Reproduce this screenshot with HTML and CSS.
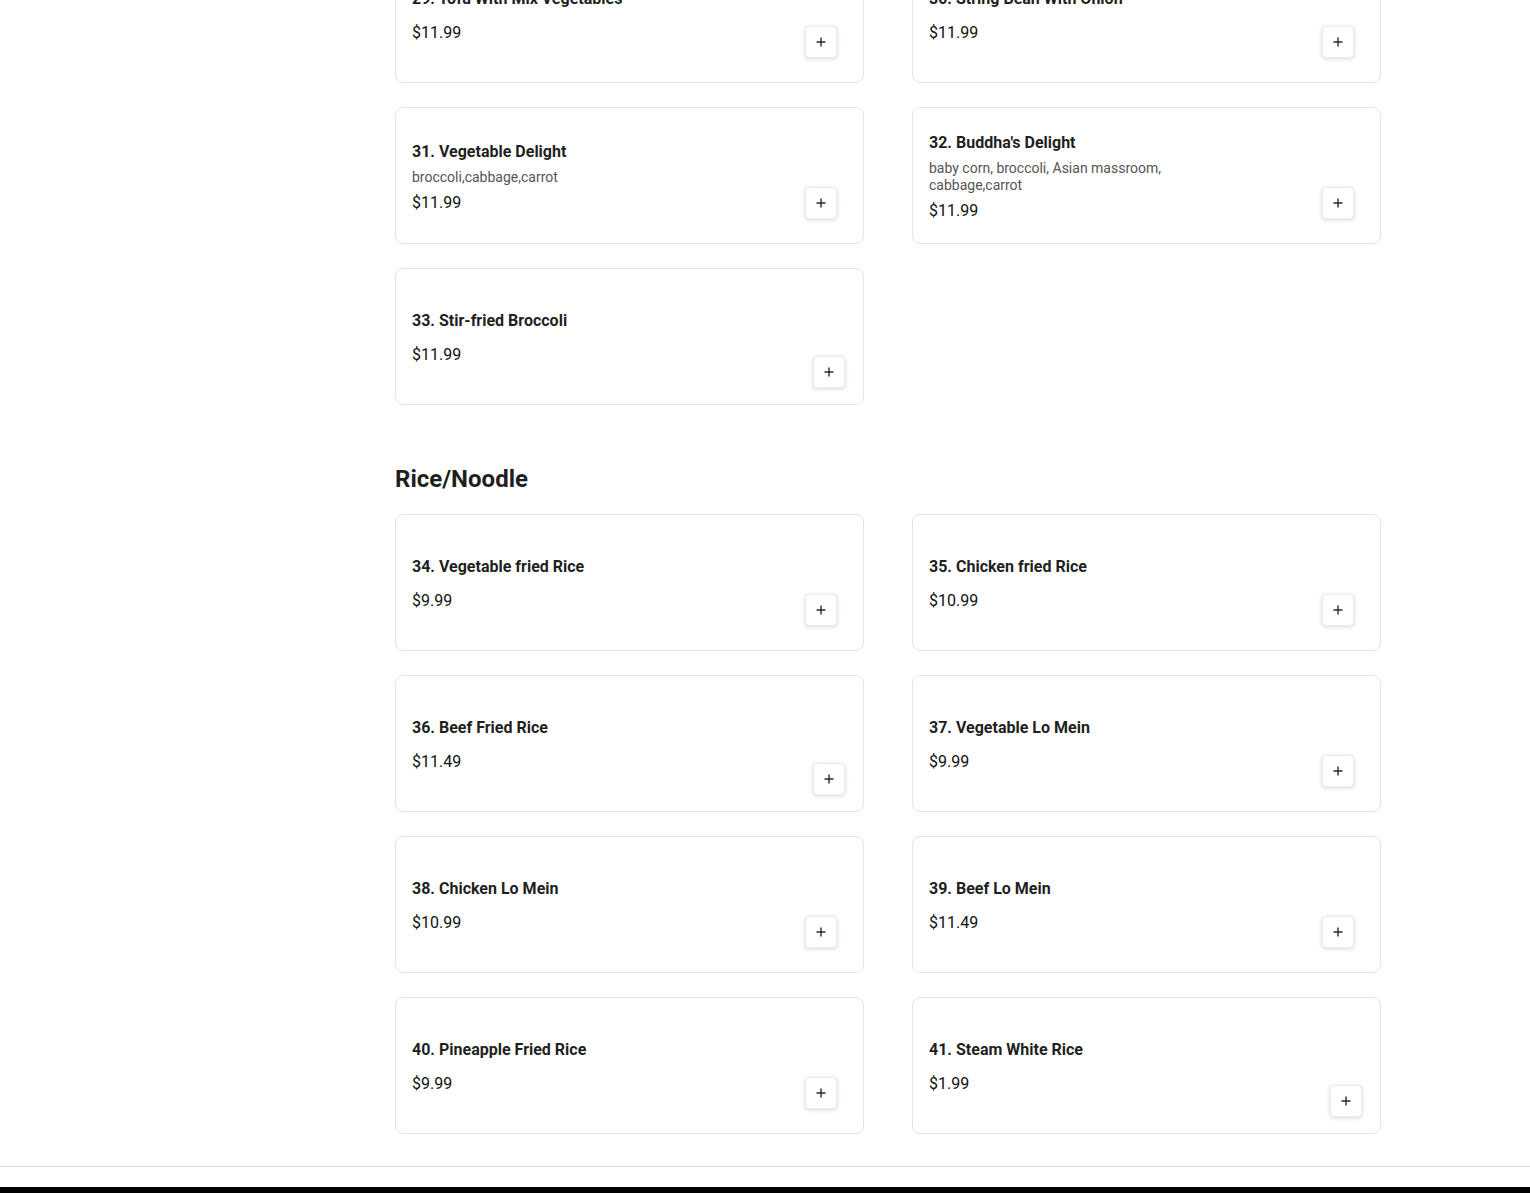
FILE: index.html
```html
<!DOCTYPE html>
<html lang="en">
<head>
<meta charset="utf-8">
<title>Menu</title>
<link rel="stylesheet" href="styles.css">
</head>
<body>
<div class="page">
  <aside class="sidebar"></aside>
  <main class="menu">
    <section class="category category--continued">
      <div class="grid">
        <div class="card">
          <div class="info"><div class="title">29. Tofu With Mix Vegetables</div><div class="desc"></div><div class="price">$11.99</div></div>
          <div class="action"><button class="add"><svg viewBox="0 0 10 10" width="10" height="10"><path d="M5 0.5v9M0.5 5h9"/></svg></button></div>
        </div>
        <div class="card">
          <div class="info"><div class="title">30. String Bean With Onion</div><div class="desc"></div><div class="price">$11.99</div></div>
          <div class="action"><button class="add"><svg viewBox="0 0 10 10" width="10" height="10"><path d="M5 0.5v9M0.5 5h9"/></svg></button></div>
        </div>
        <div class="card">
          <div class="info"><div class="title">31. Vegetable Delight</div><div class="desc">broccoli,cabbage,carrot</div><div class="price">$11.99</div></div>
          <div class="action"><button class="add"><svg viewBox="0 0 10 10" width="10" height="10"><path d="M5 0.5v9M0.5 5h9"/></svg></button></div>
        </div>
        <div class="card">
          <div class="info"><div class="title">32. Buddha's Delight</div><div class="desc">baby corn, broccoli, Asian massroom, cabbage,carrot</div><div class="price">$11.99</div></div>
          <div class="action"><button class="add"><svg viewBox="0 0 10 10" width="10" height="10"><path d="M5 0.5v9M0.5 5h9"/></svg></button></div>
        </div>
        <div class="card">
          <div class="info"><div class="title">33. Stir-fried Broccoli</div><div class="desc"></div><div class="price">$11.99</div></div>
          <div class="action action--corner"><button class="add"><svg viewBox="0 0 10 10" width="10" height="10"><path d="M5 0.5v9M0.5 5h9"/></svg></button></div>
        </div>
      </div>
    </section>

    <section class="category">
      <h2 class="category-title">Rice/Noodle</h2>
      <div class="grid">
        <div class="card">
          <div class="info"><div class="title">34. Vegetable fried Rice</div><div class="desc"></div><div class="price">$9.99</div></div>
          <div class="action"><button class="add"><svg viewBox="0 0 10 10" width="10" height="10"><path d="M5 0.5v9M0.5 5h9"/></svg></button></div>
        </div>
        <div class="card">
          <div class="info"><div class="title">35. Chicken fried Rice</div><div class="desc"></div><div class="price">$10.99</div></div>
          <div class="action"><button class="add"><svg viewBox="0 0 10 10" width="10" height="10"><path d="M5 0.5v9M0.5 5h9"/></svg></button></div>
        </div>
        <div class="card">
          <div class="info"><div class="title">36. Beef Fried Rice</div><div class="desc"></div><div class="price">$11.49</div></div>
          <div class="action action--corner"><button class="add"><svg viewBox="0 0 10 10" width="10" height="10"><path d="M5 0.5v9M0.5 5h9"/></svg></button></div>
        </div>
        <div class="card">
          <div class="info"><div class="title">37. Vegetable Lo Mein</div><div class="desc"></div><div class="price">$9.99</div></div>
          <div class="action"><button class="add"><svg viewBox="0 0 10 10" width="10" height="10"><path d="M5 0.5v9M0.5 5h9"/></svg></button></div>
        </div>
        <div class="card">
          <div class="info"><div class="title">38. Chicken Lo Mein</div><div class="desc"></div><div class="price">$10.99</div></div>
          <div class="action"><button class="add"><svg viewBox="0 0 10 10" width="10" height="10"><path d="M5 0.5v9M0.5 5h9"/></svg></button></div>
        </div>
        <div class="card">
          <div class="info"><div class="title">39. Beef Lo Mein</div><div class="desc"></div><div class="price">$11.49</div></div>
          <div class="action"><button class="add"><svg viewBox="0 0 10 10" width="10" height="10"><path d="M5 0.5v9M0.5 5h9"/></svg></button></div>
        </div>
        <div class="card">
          <div class="info"><div class="title">40. Pineapple Fried Rice</div><div class="desc"></div><div class="price">$9.99</div></div>
          <div class="action"><button class="add"><svg viewBox="0 0 10 10" width="10" height="10"><path d="M5 0.5v9M0.5 5h9"/></svg></button></div>
        </div>
        <div class="card">
          <div class="info"><div class="title">41. Steam White Rice</div><div class="desc"></div><div class="price">$1.99</div></div>
          <div class="action action--corner"><button class="add"><svg viewBox="0 0 10 10" width="10" height="10"><path d="M5 0.5v9M0.5 5h9"/></svg></button></div>
        </div>
      </div>
    </section>
  </main>
</div>
<footer class="footer">
  <div class="footer-bar"></div>
</footer>
</body>
</html>
```

FILE: styles.css
```css
* { box-sizing: border-box; }

html, body {
  margin: 0;
  padding: 0;
  background: #ffffff;
  font-family: Roboto, "Liberation Sans", Arial, sans-serif;
  color: #1f1f1f;
}

.page {
  display: flex;
  margin-top: -54px;
}

.sidebar {
  flex: 0 0 395px;
}

.menu {
  width: 986px;
  flex: none;
}

.category + .category {
  margin-top: 60px;
}

.category-title {
  margin: 0 0 21px;
  font-size: 24px;
  line-height: 28px;
  font-weight: 700;
  color: #1f1f1f;
}

.grid {
  display: grid;
  grid-template-columns: 1fr 1fr;
  column-gap: 48px;
  row-gap: 24px;
}

.card {
  height: 137px;
  border: 1px solid #e3e3e3;
  border-radius: 8px;
  background: #fff;
  padding: 16px;
  display: flex;
  justify-content: space-between;
}

.info {
  display: flex;
  flex-direction: column;
  justify-content: center;
  gap: 7px;
  max-width: 280px;
  padding-top: 3px;
}

.title {
  font-size: 16px;
  line-height: 20px;
  font-weight: 700;
  color: #1f1f1f;
}

.desc {
  font-size: 14px;
  line-height: 17px;
  color: #555555;
}

.price {
  font-size: 16px;
  line-height: 20px;
  color: #111111;
}

.action {
  display: flex;
  align-items: flex-end;
  padding: 0 10px 8px 0;
}

.action--corner {
  padding: 0 2px 0 0;
}

.add {
  width: 32px;
  height: 32px;
  padding: 0;
  display: flex;
  align-items: center;
  justify-content: center;
  background: #fff;
  border: 1px solid #ececec;
  border-radius: 4px;
  box-shadow: 0 1px 4px rgba(0, 0, 0, 0.16);
  cursor: pointer;
}

.add svg {
  display: block;
}

.add path {
  stroke: #2a2a2a;
  stroke-width: 1.4;
  fill: none;
}

.footer {
  margin-top: 32px;
  border-top: 1px solid #dcdcdc;
  box-shadow: 0 -1px 2px rgba(0, 0, 0, 0.03);
  padding-top: 20px;
}

.footer-bar {
  height: 80px;
  background: #000;
}
```
